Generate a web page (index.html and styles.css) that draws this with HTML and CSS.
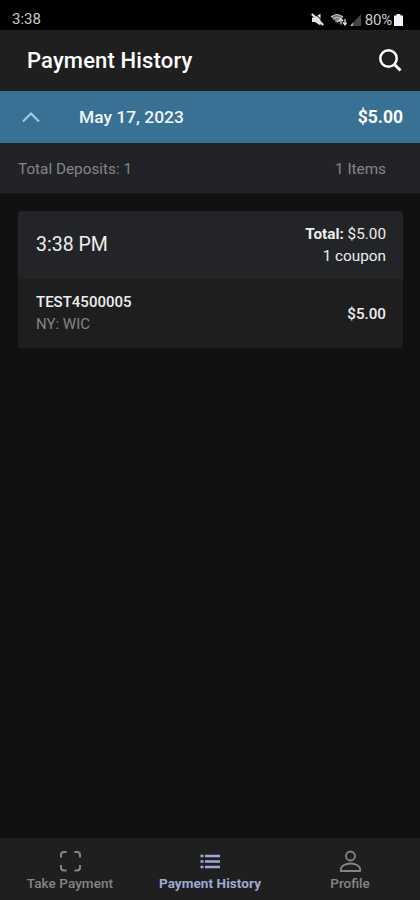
FILE: index.html
```
<!DOCTYPE html>
<html lang="en">
<head>
<meta charset="utf-8">
<title>Payment History</title>
<link rel="stylesheet" href="styles.css">
</head>
<body>
<div class="app">
  <div class="status">
    <span class="clock">3:38</span>
    <div class="status-icons">
      <svg class="mute" width="13" height="13" viewBox="0 0 13 13"><path d="M1 4.500h3l5.500-4v12L4 9H1z" fill="#e4e4e4"/><path d="M3.500 0l9 9" stroke="#000" stroke-width="1"/><path d="M.8 1l11.500 11" stroke="#e4e4e4" stroke-width="2.200"/></svg>
      <svg class="wifi" width="17" height="13" viewBox="0 0 17 13"><path d="M1 4Q7-1.500 13 4L7.500 10z" fill="#777"/><path d="M1 4Q7-1 13 4M3 6q4-3 8 0M5.500 8.500q2-1.500 4 0" fill="none" stroke="#ccc" stroke-width="1.200"/><path d="M11 11.500V6M9 8l2-2.500L13 8M15 6v5.500M13 9.500l2 2.500 1.500-2.500" fill="none" stroke="#ddd" stroke-width="1.300"/></svg>
      <svg class="signal" width="11" height="12" viewBox="0 0 11 12"><path d="M0 12L11 0v12z" fill="#444"/><path d="M0 12l3-3.500V12z" fill="#aaa"/></svg>
      <span class="percent">80%</span>
      <svg width="9" height="12" viewBox="0 0 9 12"><path d="M2.500 0h4v1.500H9V12H0V1.500h2.500z" fill="#f2f2f2"/></svg>
    </div>
  </div>
  <header class="bar">
    <h1>Payment History</h1>
    <svg width="24" height="24" viewBox="0 0 24 24" fill="none" stroke="#fff"><circle cx="10.500" cy="9.500" r="8.200" stroke-width="2.500"/><path d="M16 15l6.500 6.500" stroke-width="3"/></svg>
  </header>
  <div class="day">
    <svg width="18" height="12" viewBox="0 0 18 12" fill="none" stroke="#a9cbe1" stroke-width="2"><path d="M1 10.500l8-8 8 8"/></svg>
    <span class="date">May 17, 2023</span>
    <span class="day-total">$5.00</span>
  </div>
  <div class="summary"><span class="deposits">Total Deposits: 1</span><span class="items">1 Items</span></div>
  <main>
    <section class="card">
      <div class="card-head">
        <span class="time">3:38 PM</span>
        <div class="totals"><div class="total"><b>Total:</b> $5.00</div><div class="coupon">1 coupon</div></div>
      </div>
      <div class="card-row">
        <div class="coupon-info"><div class="code">TEST4500005</div><div class="type">NY: WIC</div></div>
        <span class="amount">$5.00</span>
      </div>
    </section>
  </main>
  <nav>
    <a class="tab"><svg width="22" height="22" viewBox="0 0 22 22" fill="none" stroke="currentColor" stroke-width="2"><path d="M2 7.500V5a3 3 0 0 1 3-3h2.500M15.500 2H18a3 3 0 0 1 3 3v2.500M21 15v2.500a3 3 0 0 1-3 3h-2.500M7.500 20.500H5a3 3 0 0 1-3-3V15"/></svg><span class="take">Take Payment</span></a>
    <a class="tab active"><svg width="22" height="22" viewBox="0 0 22 22" fill="none" stroke="currentColor" stroke-width="2.300"><path d="M1.500 6h3M1.500 11.500h3M1.500 17h3M6 6h15M6 11.500h15M6 17h15"/></svg><span class="history">Payment History</span></a>
    <a class="tab"><svg width="22" height="22" viewBox="0 0 22 22" fill="none" stroke="currentColor" stroke-width="1.800"><circle cx="11.500" cy="6" r="4.500"/><path d="M1.800 21v-1.500c0-3.500 4.500-6 9.700-6s9.700 2.500 9.700 6V21z" stroke-linejoin="round"/></svg><span class="profile">Profile</span></a>
  </nav>
</div>
</body>
</html>
```
FILE: styles.css
```
* { box-sizing: border-box; }
body { margin: 0; background: #111; color: #eee; font-family: Roboto, sans-serif; }
svg { display: block; flex: none; }
span, h1, .total, .coupon, .code, .type { white-space: nowrap; }
.app { width: 420px; height: 900px; display: flex; flex-direction: column; background: #111; }
.status { height: 30px; flex: none; background: #000; padding: 8px 17px 0 12px; display: flex; justify-content: space-between; color: #ccc; }
.clock { font-size: 15px; line-height: 23px; }
.status-icons { display: flex; align-items: center; height: 23px; }
.mute { margin-right: 6px; }
.wifi { margin-right: 3px; }
.signal { margin-right: 4px; }
.percent { font-size: 15px; letter-spacing: -0.200px; margin-right: 2px; }
.bar { height: 61px; flex: none; background: #1f1f1f; padding: 0 18px 0 27px; display: flex; align-items: center; justify-content: space-between; }
h1 { margin: 0; font-size: 22px; font-weight: 500; line-height: 28px; letter-spacing: 0.150px; color: #fff; }
.day { height: 52px; flex: none; background: #387194; padding: 0 17px 0 22px; display: flex; align-items: center; color: #f2f6f9; }
.date { margin-left: 39px; font-size: 17.400px; font-weight: 500; }
.day-total { margin-left: auto; font-size: 17.500px; font-weight: 700; color: #fff; }
.summary { height: 51px; flex: none; background: #222327; border-bottom: 1px solid #1a1a1c; padding: 1px 34px 0 18px; display: flex; align-items: center; justify-content: space-between; color: #858588; font-size: 15.300px; }
main { flex: 1; padding: 17px 17px 0 18px; }
.card { background: #1e1e1e; border-radius: 4px; overflow: hidden; }
.card-head, .card-row { display: flex; align-items: center; justify-content: space-between; padding: 0 17px 0 18px; }
.card-head { height: 68px; background: #222428; padding-bottom: 1px; }
.card-row { height: 69px; }
.time { font-size: 19.500px; }
.totals { text-align: right; font-size: 15.300px; line-height: 22px; }
.coupon-info { padding-bottom: 2px; }
.code, .type { font-size: 15px; line-height: 22px; }
.code { font-weight: 500; }
.type { color: #858585; }
.amount { font-size: 15.200px; font-weight: 500; }
nav { height: 62px; flex: none; background: #1f1f1f; border-top: 1px solid #1a1a1a; display: flex; }
.tab { flex: 1; display: flex; flex-direction: column; align-items: center; padding-top: 11px; color: #858585; font-size: 13.500px; font-weight: 500; line-height: 18px; }
.tab span { margin-top: 2px; }
.take { letter-spacing: 0.080px; }
.history { letter-spacing: 0.080px; }
.active { color: #9daad4; font-weight: 700; }
```
